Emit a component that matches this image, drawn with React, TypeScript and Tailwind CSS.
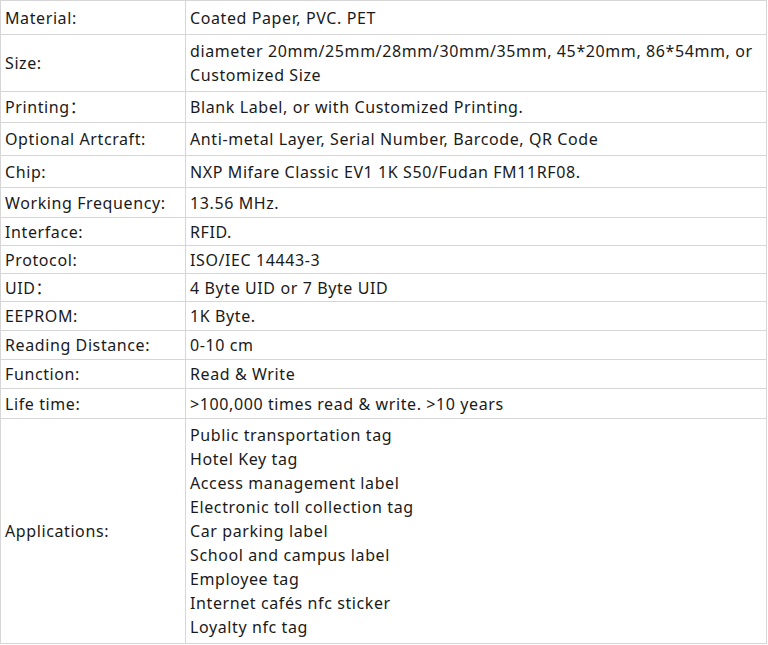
import React from 'react';

type Row = { label: string; value: string[]; h: string };

const rows: Row[] = [
  { label: 'Material:', value: ['Coated Paper, PVC. PET'], h: 'h-[34px]' },
  {
    label: 'Size:',
    value: ['diameter 20mm/25mm/28mm/30mm/35mm, 45*20mm, 86*54mm, or', 'Customized Size'],
    h: 'h-[57px]',
  },
  { label: 'Printing：', value: ['Blank Label, or with Customized Printing.'], h: 'h-[31px]' },
  { label: 'Optional Artcraft:', value: ['Anti-metal Layer, Serial Number, Barcode, QR Code'], h: 'h-[33px]' },
  { label: 'Chip:', value: ['NXP Mifare Classic EV1 1K S50/Fudan FM11RF08.'], h: 'h-[32px]' },
  { label: 'Working Frequency:', value: ['13.56 MHz.'], h: 'h-[30px]' },
  { label: 'Interface:', value: ['RFID.'], h: 'h-[28px]' },
  { label: 'Protocol:', value: ['ISO/IEC 14443-3'], h: 'h-[28px]' },
  { label: 'UID：', value: ['4 Byte UID or 7 Byte UID'], h: 'h-[28px]' },
  { label: 'EEPROM:', value: ['1K Byte.'], h: 'h-[29px]' },
  { label: 'Reading Distance:', value: ['0-10 cm'], h: 'h-[29px]' },
  { label: 'Function:', value: ['Read & Write'], h: 'h-[29px]' },
  { label: 'Life time:', value: ['>100,000 times read & write. >10 years'], h: 'h-[30px]' },
  {
    label: 'Applications:',
    value: [
      'Public transportation tag',
      'Hotel Key tag',
      'Access management label',
      'Electronic toll collection tag',
      'Car parking label',
      'School and campus label',
      'Employee tag',
      'Internet cafés nfc sticker',
      'Loyalty nfc tag',
    ],
    h: 'h-[225px]',
  },
];

export default function App() {
  return (
    <div className="w-[768px] bg-white text-[16px] leading-[24px] tracking-[0.6px] text-[#1a1a1a] [font-family:'Noto_Sans','Noto_Sans_CJK_SC',sans-serif]">
      <table className="w-[767px] border-collapse table-fixed">
        <colgroup>
          <col className="w-[185px]" />
          <col />
        </colgroup>
        <tbody>
          {rows.map((r) => (
            <tr key={r.label} className={r.h}>
              <td className="border border-[#d6d6d6] px-[4px] align-middle">{r.label}</td>
              <td className="border border-[#d6d6d6] px-[4px] align-middle">
                {r.value.map((v) => (
                  <div key={v} className="whitespace-nowrap">{v}</div>
                ))}
              </td>
            </tr>
          ))}
        </tbody>
      </table>
    </div>
  );
}
